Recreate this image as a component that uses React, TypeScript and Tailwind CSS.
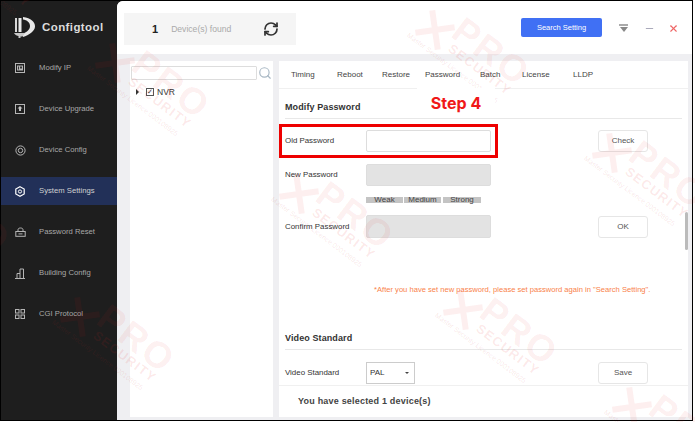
import { RefreshCw, Search, Minus, X } from 'lucide-react';

const font = { fontFamily: '"Liberation Sans", Arial, sans-serif' };

const IconIp = () => (
  <svg width="10" height="10" viewBox="0 0 10 10" fill="none">
    <rect x="0.5" y="0.5" width="9" height="9" stroke="#b5b5b5" />
    <rect x="2" y="2.5" width="6" height="5" fill="#b5b5b5" />
    <rect x="3" y="3.5" width="1" height="3" fill="#333" />
    <rect x="5" y="3.5" width="2" height="2" fill="#333" />
  </svg>
);

const IconUpgrade = () => (
  <svg width="10" height="10" viewBox="0 0 10 10" fill="none">
    <rect x="0.5" y="0.5" width="9" height="9" stroke="#b5b5b5" />
    <path d="M5 2L7.5 4.5H6V7H4V4.5H2.5Z" fill="#c4c4c4" />
  </svg>
);

const IconConfig = () => (
  <svg width="11" height="11" viewBox="0 0 11 11" fill="none">
    <circle cx="5.5" cy="5.5" r="4.6" stroke="#b5b5b5" />
    <circle cx="5.5" cy="5.5" r="2.2" stroke="#b5b5b5" />
  </svg>
);

const IconSettings = () => (
  <svg width="10" height="11" viewBox="0 0 10 11" fill="none">
    <path d="M5 0.8L9.2 3V8L5 10.2L0.8 8V3Z" stroke="#ffffff" strokeWidth="1.2" />
    <circle cx="5" cy="5.5" r="1.6" stroke="#ffffff" />
  </svg>
);

const IconLock = () => (
  <svg width="11" height="10" viewBox="0 0 11 10" fill="none">
    <path d="M3 4.5V2.8C3 1.6 4 1 5.5 1S8 1.6 8 2.8V4.5" stroke="#b5b5b5" />
    <rect x="0.8" y="4.5" width="9.4" height="4.8" stroke="#b5b5b5" />
    <rect x="3.5" y="6.4" width="4" height="1" fill="#b5b5b5" />
  </svg>
);

const IconBuilding = () => (
  <svg width="10" height="11" viewBox="0 0 10 11" fill="none">
    <path d="M0 10.5H10M2 10.5V5.5H5M5 10.5V1H8.5V10.5" stroke="#b5b5b5" />
  </svg>
);

const IconGrid = () => (
  <svg width="10" height="10" viewBox="0 0 10 10" fill="none">
    <rect x="0.5" y="0.5" width="3.5" height="3.5" stroke="#b5b5b5" />
    <rect x="6" y="0.5" width="3.5" height="3.5" stroke="#b5b5b5" />
    <rect x="0.5" y="6" width="3.5" height="3.5" stroke="#b5b5b5" />
    <rect x="6" y="6" width="3.5" height="3.5" stroke="#b5b5b5" />
  </svg>
);

const navItems = [
  { label: 'Modify IP', icon: <IconIp /> },
  { label: 'Device Upgrade', icon: <IconUpgrade /> },
  { label: 'Device Config', icon: <IconConfig /> },
  { label: 'System Settings', icon: <IconSettings />, active: true },
  { label: 'Password Reset', icon: <IconLock /> },
  { label: 'Building Config', icon: <IconBuilding /> },
  { label: 'CGI Protocol', icon: <IconGrid /> },
];

const tabs = [
  { label: 'Timing', w: 'w-[46px]' },
  { label: 'Reboot', w: 'w-[45px]' },
  { label: 'Restore', w: 'w-[43px]' },
  { label: 'Password', w: 'w-[55px]' },
  { label: 'Batch', w: 'w-[42px]' },
  { label: 'License', w: 'w-[51px]' },
  { label: 'LLDP', w: 'w-[40px]' },
];

// faint logo stamps lying over the page, x/y is the centre of the cross
const stamps = [
  { x: 115, y: 63 },
  { x: 435, y: 30 },
  { x: 612, y: 153 },
  { x: 299, y: 194 },
  { x: 463, y: 310 },
  { x: 80, y: 317 },
  { x: 632, y: 407 },
  { x: -46, y: -58 },
  { x: -85, y: 197 },
];

function Stamp({ x, y }: { x: number; y: number }) {
  return (
    <div
      className="absolute w-0 h-0 rotate-[37deg] origin-top-left leading-none whitespace-nowrap pointer-events-none select-none"
      style={{ left: x, top: y }}
    >
      <svg className="absolute left-[-17px] top-[-17px]" width="34" height="34" viewBox="0 0 34 34">
        <path d="M3 3L31 31M31 3L3 31" stroke="#e02020" strokeOpacity="0.07" strokeWidth="6" />
      </svg>
      <div className="absolute left-[15px] top-[-35px] text-[37px] font-bold tracking-[2px] text-[#e02020]/8">PRO</div>
      <div className="absolute left-[22px] top-[-2px] text-[13px] font-bold tracking-[1.2px] text-[#e02020]/10">SECURITY</div>
      <div className="absolute left-[-19px] top-[16px] text-[7px] text-[#c02020]/12">Master Security Licence 000108925</div>
    </div>
  );
}

function SectionTitle({ children, className }: { children: string; className: string }) {
  return (
    <div className={`${className} mx-[6px] h-[19px] shrink-0 border-b border-[#e8e8e8] text-[9px] font-bold tracking-[0.1px] text-[#333] leading-[14px]`}>
      {children}
    </div>
  );
}

function FormRow({
  label,
  className,
  field,
  action,
}: {
  label: string;
  className: string;
  field: React.ReactNode;
  action?: string;
}) {
  return (
    <div className={`${className} flex items-center pl-[6px] shrink-0`}>
      <span className="w-[81px] text-[7.9px] text-[#333]">{label}</span>
      <div className="w-[125px]">{field}</div>
      {action && (
        <button className="ml-[107px] w-[50px] h-[22px] bg-white border border-[#e6e6e6] rounded-[3px] text-[8px] text-[#555]">
          {action}
        </button>
      )}
    </div>
  );
}

export default function App() {
  return (
    <div className="relative w-[695px] h-[422px] overflow-hidden bg-white" style={font}>
      <div className="w-[693px] h-[421px] border border-black flex bg-[#1e1e1e]">
        {/* Sidebar */}
        <aside className="w-[116px] shrink-0 text-[#a8a8a8]">
          <div className="h-[47px] flex items-center pl-[13px] pt-[6px] gap-[7px]">
            <svg width="21" height="21" viewBox="0 0 21 21" fill="none">
              <rect x="1" y="1" width="2" height="14" fill="#d8d8d8" />
              <rect x="4.5" y="1" width="3" height="14" fill="#e8e8e8" />
              <path d="M9 0C17 1 21 5 21 9.500C21 14 15 18 9 20V16.500C13 15 16 12.500 16 9C16 5.500 13 3 9 2.500Z" fill="#e8e8e8" />
              <path d="M0 16H11L8.500 19.500H6.500V21H4.500V19C3 19 1 18 0 16Z" fill="#c8c8c8" />
            </svg>
            <span className="text-[11.5px] font-bold tracking-[0.4px] text-[#dcdcdc]">Configtool</span>
          </div>
          <nav className="mt-[6px]">
            {navItems.map((item) => (
              <div
                key={item.label}
                className={`h-[28px] mb-[13px] flex items-center text-[7.7px] ${
                  item.active ? 'bg-[#223058] text-[#d0d0d0]' : ''
                }`}
              >
                <span className="w-[38px] flex justify-center pl-[1px] pr-[1px]">{item.icon}</span>
                <span>{item.label}</span>
              </div>
            ))}
          </nav>
        </aside>

        {/* Main */}
        <main className="flex-1 min-w-0 bg-[#efeff2] rounded-tl-[6px] overflow-hidden flex flex-col">
          <header className="h-[53px] shrink-0 bg-white flex items-start pt-[12px] pl-[7px]">
            <div className="w-[172px] h-[32px] shrink-0 bg-[#f5f5f5] flex items-center">
              <span className="ml-[28px] text-[11px] font-bold text-[#222]">1</span>
              <span className="ml-[13px] text-[8.6px] text-[#aaa]">Device(s) found</span>
              <RefreshCw size={16} strokeWidth={2.6} className="ml-[32px] text-[#333]" />
            </div>
            <button className="ml-[225px] mt-[5px] w-[81px] h-[19px] shrink-0 bg-[#4070f4] rounded-[2px] text-[7.5px] text-white">
              Search Setting
            </button>
            <div className="ml-[17px] mt-[11px] w-[9px] flex flex-col items-center">
              <div className="w-[9px] h-[2px] bg-[#aaa]" />
              <div className="mt-[1px] w-0 h-0 border-x-[4px] border-x-transparent border-t-[5px] border-t-[#888]" />
            </div>
            <Minus size={11} strokeWidth={2.4} className="ml-[16px] mt-[10px] text-[#aab]" />
            <X size={11} strokeWidth={2.4} className="ml-[13px] mt-[10px] text-[#e66]" />
          </header>

          <div className="flex-1 min-h-0 flex pt-[7px] pl-[13px] pb-[3px]">
            {/* Device tree */}
            <section className="w-[143px] shrink-0 bg-white px-[1px] pt-[5px]">
              <div className="flex items-center">
                <div className="w-[126px] h-[14px] bg-white border border-[#ddd] rounded-[1px]" />
                <Search size={14} className="ml-[1px] text-[#a9b8c4]" />
              </div>
              <div className="flex items-center mt-[6px] ml-[5px] text-[8.5px] text-[#333]">
                <div className="w-0 h-0 border-y-[3px] border-y-transparent border-l-[3px] border-l-[#333]" />
                <div className="ml-[7px] w-[8px] h-[8px] border border-[#555] text-[7px] leading-[6px] text-center">✓</div>
                <span className="ml-[3px]">NVR</span>
              </div>
            </section>

            {/* Settings panel */}
            <section className="relative w-[409px] ml-[6px] shrink-0 bg-white flex flex-col overflow-hidden">
              <div className="h-[28px] shrink-0 border-b border-[#f0f0f0] flex items-center pl-[12px] text-[8px] text-[#444]">
                {tabs.map((tab) => (
                  <span key={tab.label} className={tab.w}>
                    {tab.label}
                  </span>
                ))}
              </div>

              <SectionTitle className="mt-[11px]">Modify Password</SectionTitle>
              <FormRow
                label="Old Password"
                className="mt-[11px]"
                field={<div className="h-[22px] bg-white border border-[#ddd] rounded-[2px]" />}
                action="Check"
              />
              <FormRow
                label="New Password"
                className="mt-[12px]"
                field={<div className="h-[22px] bg-[#e3e3e3] border border-[#ddd] rounded-[2px]" />}
              />
              <div className="mt-[11px] ml-[87px] flex text-[8px] text-[#444] leading-[5px] shrink-0">
                <span className="w-[37px] h-[6px] bg-[#c4c4c4] text-center">Weak</span>
                <span className="ml-[1px] w-[37px] h-[6px] bg-[#c4c4c4] text-center">Medium</span>
                <span className="ml-[2px] w-[38px] h-[6px] bg-[#c4c4c4] text-center">Strong</span>
              </div>
              <FormRow
                label="Confirm Password"
                className="mt-[12px]"
                field={<div className="h-[23px] bg-[#e3e3e3] border border-[#ddd] rounded-[2px]" />}
                action="OK"
              />
              <p className="mt-[46px] ml-[95px] h-[12px] leading-[12px] shrink-0 text-[7.6px] text-[#f9824a] whitespace-nowrap">
                *After you have set new password, please set password again in "Search Setting".
              </p>

              <SectionTitle className="mt-[35px]">Video Standard</SectionTitle>
              <FormRow
                label="Video Standard"
                className="mt-[12px]"
                field={
                  <div className="w-[49px] h-[22px] border border-[#ccc] flex items-center justify-between px-[3px] text-[8px] text-[#333]">
                    <span>PAL</span>
                    <div className="mr-[2px] w-0 h-0 border-x-[2.5px] border-x-transparent border-t-[2.5px] border-t-[#444]" />
                  </div>
                }
                action="Save"
              />

              {/* Footer over the scrolling form */}
              <div className="absolute left-0 right-0 bottom-0 h-[32px] bg-white border-t border-[#f0f0f0] flex items-center pl-[19px] text-[9px] font-bold tracking-[0.2px] text-[#444]">
                You have selected 1 device(s)
              </div>
              <div className="absolute right-0 top-[151px] w-[3px] h-[38px] bg-[#bbb] rounded-full" />
            </section>
          </div>
        </main>
      </div>

      {/* Stamps and annotation lying over the screenshot */}
      {stamps.map((s) => (
        <Stamp key={`${s.x}-${s.y}`} x={s.x} y={s.y} />
      ))}
      <div className="absolute left-[417px] top-[88px] w-[78px] h-[30px] bg-white flex items-center justify-center text-[16px] font-bold text-[#f01818]" style={{ fontFamily: 'Inter, sans-serif' }}>
        Step 4
      </div>
      <div className="absolute left-[279px] top-[124px] w-[219px] h-[34px] border-[3px] border-[#ee0000]" />
    </div>
  );
}
